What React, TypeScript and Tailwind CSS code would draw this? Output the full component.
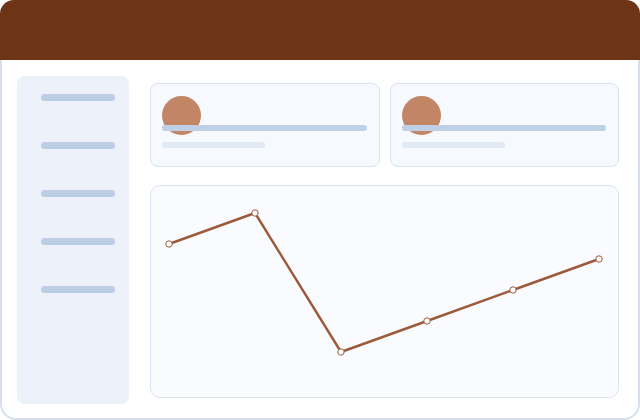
import React from "react";

const NAV_ITEMS = [0, 1, 2, 3, 4];

const POINTS: [number, number][] = [
  [18, 58],
  [104, 27],
  [190, 166],
  [276, 135],
  [362, 104],
  [448, 73],
];

function StatCard() {
  return (
    <div className="relative h-[84px] flex-1 rounded-lg border border-[#d8e2f0] bg-[#f6f9fe] pl-[11px] pr-3 pt-3">
      <div className="h-[39px] w-[39px] rounded-full bg-[#c28565]" />
      <div className="absolute left-[11px] right-3 top-[41px] h-[6px] rounded-full bg-[#bfcfe5]" />
      <div className="mt-[7px] h-[6px] w-[103px] rounded-full bg-[#e1e9f4]" />
    </div>
  );
}

function LineChart() {
  const d = POINTS.map(([x, y], i) => `${i === 0 ? "M" : "L"}${x} ${y}`).join(" ");
  return (
    <div className="h-[213px] rounded-[10px] border border-[#dbe4ef] bg-[#f9fbfe]">
      <svg width="469" height="211" viewBox="0 0 469 211" className="block">
        <path d={d} fill="none" stroke="#9d5a3a" strokeWidth="2.4" strokeLinejoin="round" />
        {POINTS.map(([x, y]) => (
          <circle key={x} cx={x} cy={y} r="3.2" fill="#ffffff" stroke="#9d5a3a" strokeWidth="1" />
        ))}
      </svg>
    </div>
  );
}

export default function App() {
  return (
    <div className="h-[420px] w-[640px] bg-white">
      {/* Header */}
      <div className="h-[60px] rounded-t-[14px] bg-[#6d3415]" />

      {/* Body */}
      <div className="flex h-[360px] gap-[21px] rounded-b-2xl border-2 border-t-0 border-[#d6dfeb] bg-white pl-[15px] pr-[19px] pt-4">
        {/* Sidebar */}
        <div className="flex h-[328px] w-[112px] shrink-0 flex-col gap-[41px] rounded-lg bg-[#edf2fa] pl-6 pt-[18px]">
          {NAV_ITEMS.map((i) => (
            <div key={i} className="h-[7px] w-[74px] rounded-full bg-[#bccde4]" />
          ))}
        </div>

        {/* Main */}
        <div className="flex min-w-0 flex-1 flex-col gap-[18px] pt-[7px]">
          <div className="flex gap-[10px]">
            <StatCard />
            <StatCard />
          </div>
          <LineChart />
        </div>
      </div>
    </div>
  );
}
